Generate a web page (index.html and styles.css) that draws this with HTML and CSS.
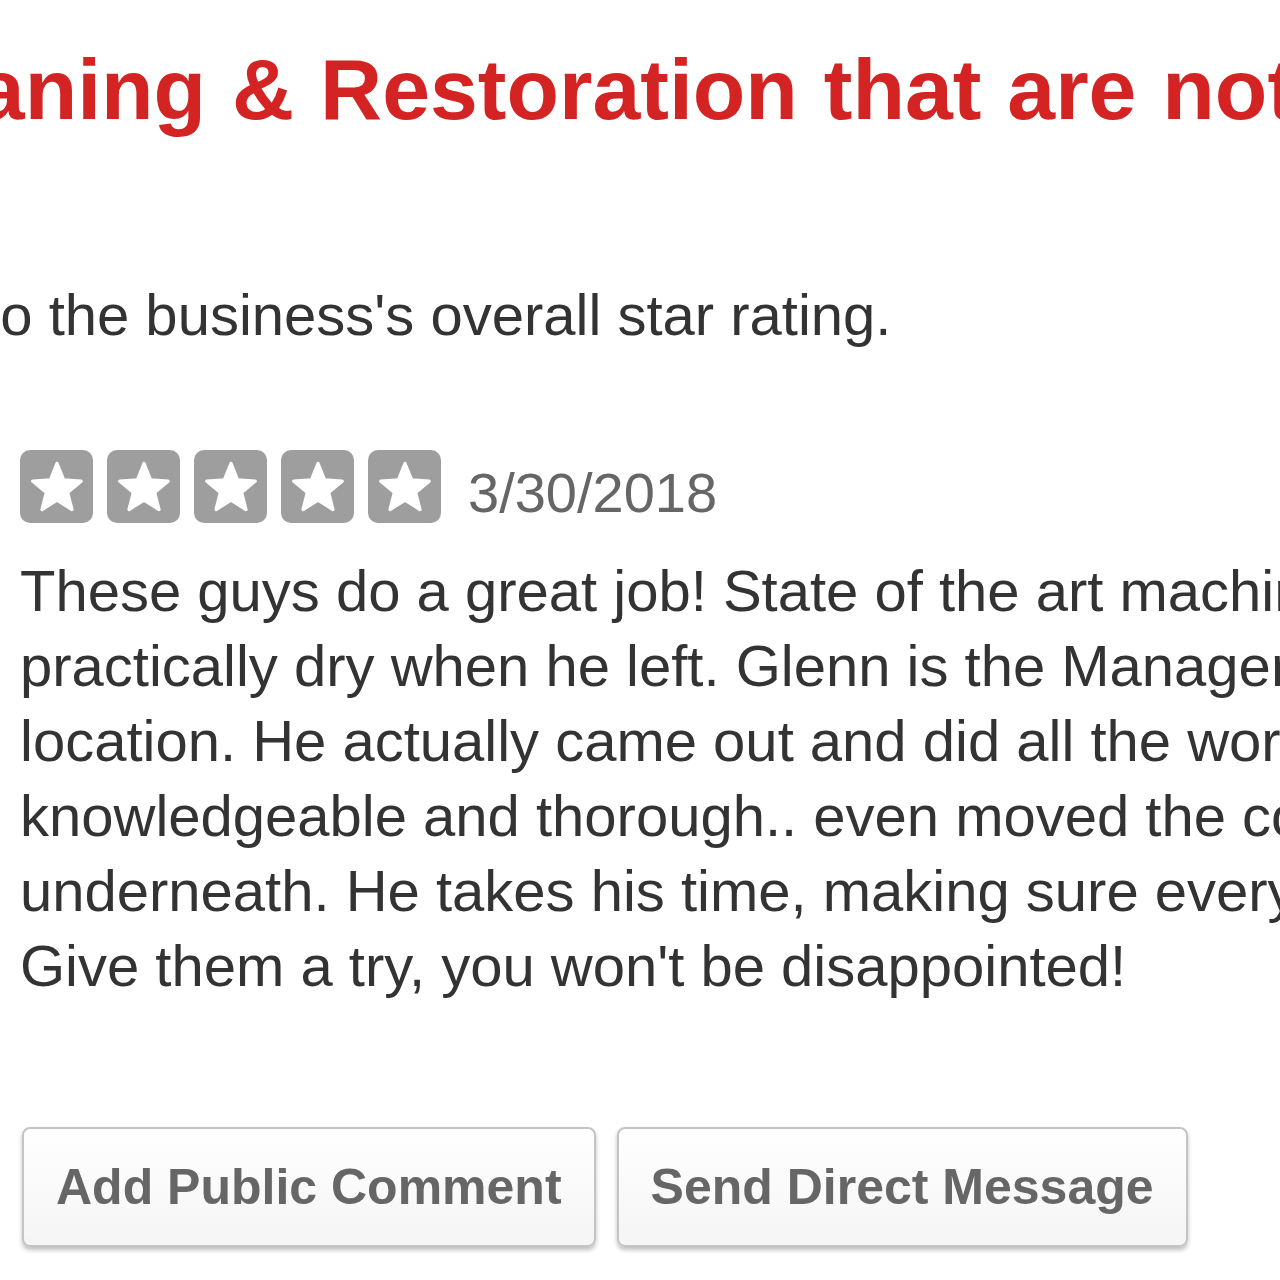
FILE: index.html
```html
<!DOCTYPE html>
<html lang="en">
<head>
    <meta charset="UTF-8">
    <title>Not Recommended Reviews</title>
    <link rel="stylesheet" href="styles.css">
</head>
<body>
    <div class="page">
        <h1 class="title">Cleaning &amp; Restoration that are not currently recommended</h1>
        <p class="note">into the business's overall star rating.</p>

        <div class="review">
            <div class="rating-row">
                <div class="stars">
                    <span class="star"><svg viewBox="0 0 24 24"><path d="M12 2.3L14.7 9.08 21.99 9.56 16.37 14.22 18.17 21.29 12 17.4 5.83 21.29 7.63 14.22 2.01 9.56 9.3 9.08z"/></svg></span>
                    <span class="star"><svg viewBox="0 0 24 24"><path d="M12 2.3L14.7 9.08 21.99 9.56 16.37 14.22 18.17 21.29 12 17.4 5.83 21.29 7.63 14.22 2.01 9.56 9.3 9.08z"/></svg></span>
                    <span class="star"><svg viewBox="0 0 24 24"><path d="M12 2.3L14.7 9.08 21.99 9.56 16.37 14.22 18.17 21.29 12 17.4 5.83 21.29 7.63 14.22 2.01 9.56 9.3 9.08z"/></svg></span>
                    <span class="star"><svg viewBox="0 0 24 24"><path d="M12 2.3L14.7 9.08 21.99 9.56 16.37 14.22 18.17 21.29 12 17.4 5.83 21.29 7.63 14.22 2.01 9.56 9.3 9.08z"/></svg></span>
                    <span class="star"><svg viewBox="0 0 24 24"><path d="M12 2.3L14.7 9.08 21.99 9.56 16.37 14.22 18.17 21.29 12 17.4 5.83 21.29 7.63 14.22 2.01 9.56 9.3 9.08z"/></svg></span>
                </div>
                <span class="date">3/30/2018</span>
            </div>
            <p class="review-text">
                <span>These guys do a great job! State of the art machines and the carpets were</span>
                <span>practically dry when he left. Glenn is the Manager at this</span>
                <span>location. He actually came out and did all the work himself. Very</span>
                <span>knowledgeable and thorough.. even moved the couch to clean</span>
                <span>underneath. He takes his time, making sure everything is done right.</span>
                <span>Give them a try, you won't be disappointed!</span>
            </p>
        </div>

        <div class="actions">
            <button class="btn">Add Public Comment</button>
            <button class="btn">Send Direct Message</button>
        </div>
    </div>
</body>
</html>
```

FILE: styles.css
```css
body {
    margin: 0;
    background-color: #fff;
    font-family: "Liberation Sans", Arial, sans-serif;
    overflow: hidden;
}
.page {
    width: 1280px;
    height: 1280px;
    overflow: hidden;
    padding-top: 39px;
    box-sizing: border-box;
}
.title {
    margin: 0 0 0 -157px;
    font-size: 86px;
    font-weight: bold;
    line-height: 100px;
    word-spacing: 2px;
    color: #d32323;
    white-space: nowrap;
}
.note {
    margin: 138px 0 0 -61px;
    font-size: 58px;
    line-height: 75px;
    color: #333;
    white-space: nowrap;
}
.review {
    margin: 98px 0 0 20px;
}
.rating-row {
    display: flex;
    align-items: flex-end;
    gap: 27px;
}
.stars {
    display: flex;
    gap: 14px;
}
.star {
    width: 73px;
    height: 73px;
    border-radius: 10px;
    background-color: #9e9e9e;
    display: flex;
    align-items: center;
    justify-content: center;
}
.star svg {
    width: 58px;
    height: 58px;
    fill: #fff;
    stroke: #fff;
    stroke-width: 1.4;
    stroke-linejoin: round;
}
.date {
    font-size: 56px;
    line-height: 60px;
    color: #666;
}
.review-text {
    margin: 30px 0 0;
    font-size: 58px;
    line-height: 75px;
    color: #333;
}
.review-text span {
    display: block;
    white-space: nowrap;
}
.actions {
    display: flex;
    gap: 21px;
    margin: 124px 0 0 22px;
}
.btn {
    height: 120px;
    padding: 0 32px;
    font-family: "Liberation Sans", Arial, sans-serif;
    font-size: 50px;
    font-weight: bold;
    color: #666;
    background: linear-gradient(#fff, #f5f5f5);
    border: 2px solid #c4c4c4;
    border-radius: 8px;
    box-shadow: 0 3px 4px rgba(0, 0, 0, 0.25);
}
```
